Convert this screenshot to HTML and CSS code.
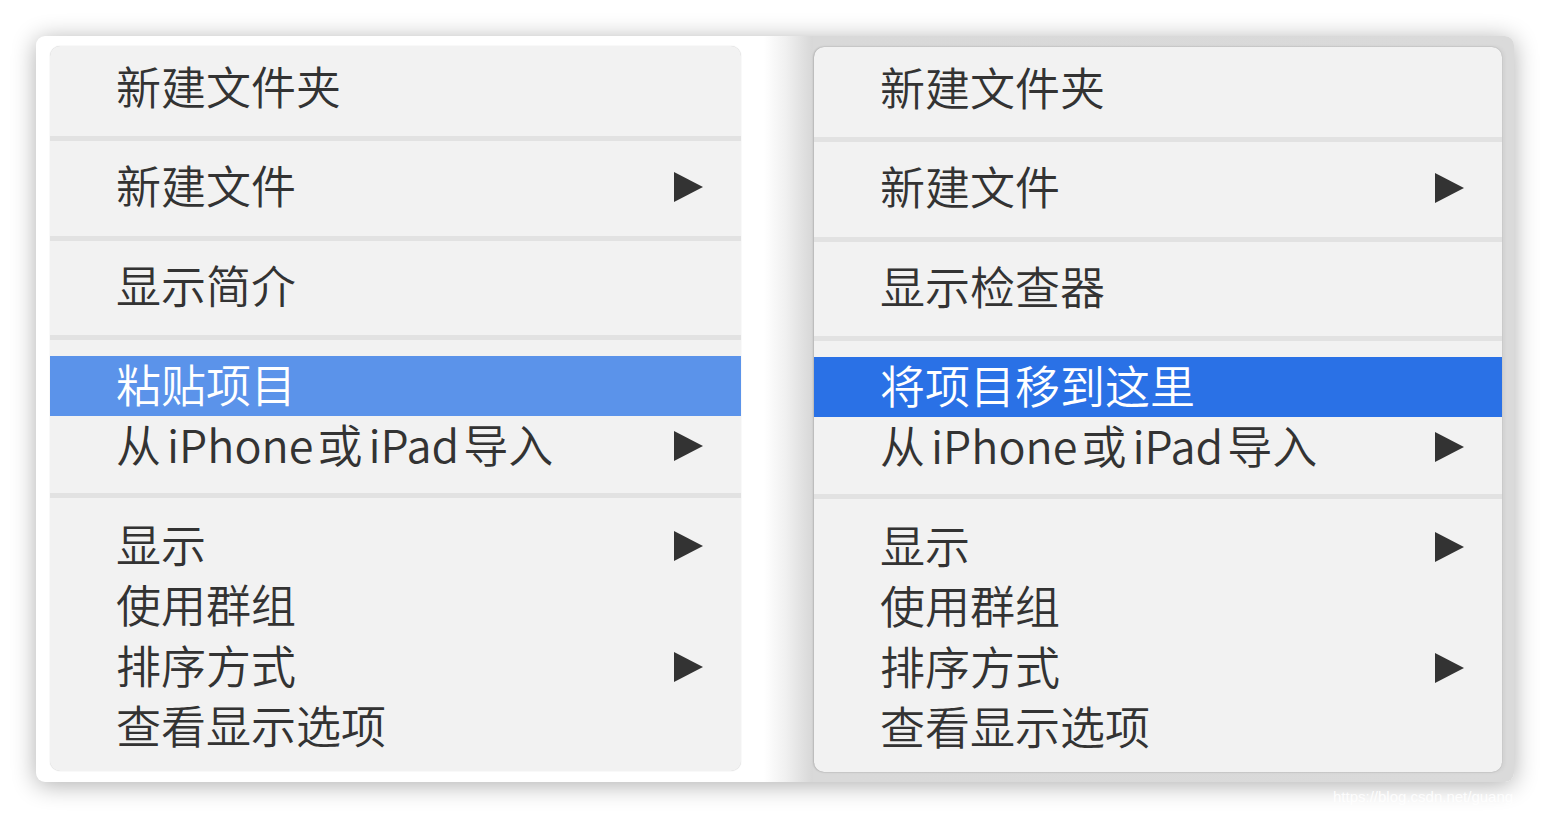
FILE: index.html
```html
<!DOCTYPE html>
<html lang="zh-CN">
<head>
<meta charset="utf-8">
<title>菜单对比</title>
<link rel="stylesheet" href="styles.css">
</head>
<body>
<div class="card">
  <div class="pane pane-left">
    <div class="menu menu-left">
      <div class="sec s1"><div class="row"><span class="label">新建文件夹</span></div></div>
      <div class="sec s2"><div class="row"><span class="label">新建文件</span><span class="arrow"></span></div></div>
      <div class="sec s3"><div class="row"><span class="label">显示简介</span></div></div>
      <div class="sec s4">
        <div class="row hl hl-light"><span class="label">粘贴项目</span></div>
        <div class="row"><span class="label">从<span class="lat">iPhone</span>或<span class="lat">iPad</span>导入</span><span class="arrow"></span></div>
      </div>
      <div class="sec s5">
        <div class="row"><span class="label">显示</span><span class="arrow"></span></div>
        <div class="row"><span class="label">使用群组</span></div>
        <div class="row"><span class="label">排序方式</span><span class="arrow"></span></div>
        <div class="row"><span class="label">查看显示选项</span></div>
      </div>
    </div>
  </div>
  <div class="pane pane-right">
    <div class="menu menu-right">
      <div class="sec s1"><div class="row"><span class="label">新建文件夹</span></div></div>
      <div class="sec s2"><div class="row"><span class="label">新建文件</span><span class="arrow"></span></div></div>
      <div class="sec s3"><div class="row"><span class="label">显示检查器</span></div></div>
      <div class="sec s4">
        <div class="row hl hl-strong"><span class="label">将项目移到这里</span></div>
        <div class="row"><span class="label">从<span class="lat">iPhone</span>或<span class="lat">iPad</span>导入</span><span class="arrow"></span></div>
      </div>
      <div class="sec s5">
        <div class="row"><span class="label">显示</span><span class="arrow"></span></div>
        <div class="row"><span class="label">使用群组</span></div>
        <div class="row"><span class="label">排序方式</span><span class="arrow"></span></div>
        <div class="row"><span class="label">查看显示选项</span></div>
      </div>
    </div>
  </div>
</div>
<div class="watermark">https://blog.csdn.net/guang</div>
</body>
</html>
```
FILE: styles.css
```css
html, body {
  margin: 0;
  padding: 0;
  background: #ffffff;
}
body {
  width: 1550px;
  height: 818px;
  padding: 36px 0 0 36px;
  box-sizing: border-box;
  position: relative;
  overflow: hidden;
  font-family: "Noto Sans CJK SC", "Noto Sans", sans-serif;
}
.card {
  width: 1478px;
  height: 746px;
  background: #ffffff;
  border-radius: 9px;
  box-shadow: 0 3px 24px rgba(0, 0, 0, 0.32);
  display: flex;
  overflow: hidden;
}
.pane-left {
  width: 706px;
  padding: 10px 0 0 14px;
  box-sizing: border-box;
}
.pane-right {
  width: 772px;
  padding: 11px 0 0 72px;
  box-sizing: border-box;
  background: linear-gradient(to right, #ffffff 0, #ffffff 22px, #f0f0f0 44px, #e1e1e1 60px, #d8d8d8 70px, #d9d9d9 72px, #dadada 100%);
}
.menu {
  background: #f2f2f2;
  border-radius: 10px;
  height: 725px;
  box-sizing: border-box;
  overflow: hidden;
  box-shadow: 0 0 1px rgba(0, 0, 0, 0.25);
}
.menu-left { width: 691px; }
.menu-right {
  width: 688px;
  box-shadow: -1px 0 2px rgba(0, 0, 0, 0.14), 2px 0 4px rgba(0, 0, 0, 0.06), 0 0 1px rgba(0, 0, 0, 0.2);
}
.sec { border-bottom: 5px solid #e2e2e2; }
.sec:last-child { border-bottom: none; }
.s1 { padding: 12px 0 18px; }
.s2 { padding: 16px 0 19px; }
.s3 { padding: 16px 0 18px; }
.s4 { padding: 16px 0 17px; }
.s5 { padding: 18px 0 0; }
.s5 .row:nth-child(3), .s5 .row:nth-child(4) { margin-top: 0.5px; }
.row {
  height: 60px;
  display: flex;
  align-items: center;
  justify-content: space-between;
  padding: 0 38px 0 66px;
  font-size: 45px;
  line-height: 56px;
  font-weight: 350;
  color: #333333;
  white-space: nowrap;
}
.label { margin-bottom: 4px; }
.lat { margin: 0 4px 0 6px; }
.hl { color: #ffffff; }
.hl-light { background: #5b93ea; }
.hl-strong { background: #2a71e6; }
.arrow {
  width: 0;
  height: 0;
  border-top: 15px solid transparent;
  border-bottom: 15px solid transparent;
  border-left: 29px solid #333333;
}
.watermark {
  position: absolute;
  left: 1333px;
  top: 788px;
  font-family: "Liberation Sans", sans-serif;
  font-size: 15px;
  color: rgba(255, 255, 255, 0.9);
  white-space: nowrap;
}
```
